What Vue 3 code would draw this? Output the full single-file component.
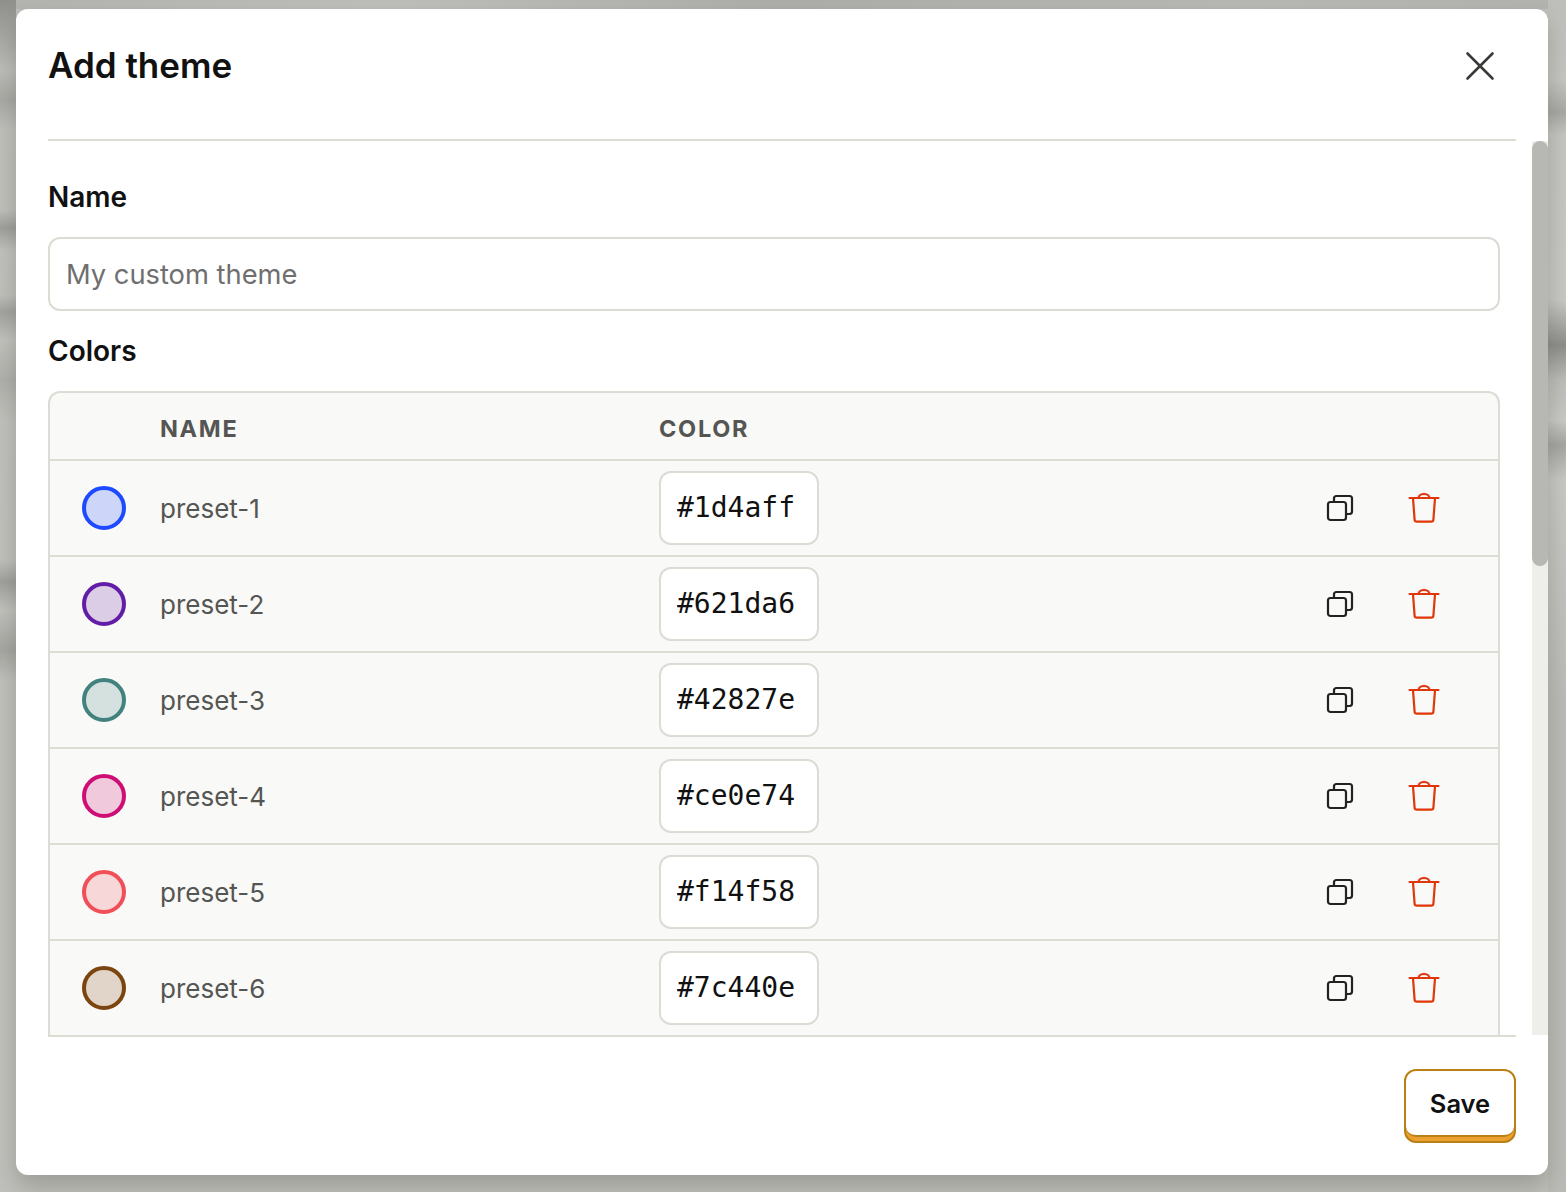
<script setup>
const presets = [
  { name: 'preset-1', color: '#1d4aff' },
  { name: 'preset-2', color: '#621da6' },
  { name: 'preset-3', color: '#42827e' },
  { name: 'preset-4', color: '#ce0e74' },
  { name: 'preset-5', color: '#f14f58' },
  { name: 'preset-6', color: '#7c440e' },
]
</script>

<template>
  <div class="backdrop">
    <div class="modal">
      <header class="modal-header">
        <h1 class="title">Add theme</h1>
        <button class="close" aria-label="Close">
          <svg width="32" height="32" viewBox="0 0 32 32" fill="none" stroke="#3a3a38" stroke-width="2.6" stroke-linecap="round">
            <path d="M3.5 3.5 L28.5 28.5 M28.5 3.5 L3.5 28.5" />
          </svg>
        </button>
      </header>

      <div class="modal-main">
        <div class="modal-body">
          <label class="label">Name</label>
          <input class="name-input" placeholder="My custom theme" />

          <label class="label">Colors</label>
          <div class="table">
            <div class="row head">
              <span></span>
              <span class="th">NAME</span>
              <span class="th">COLOR</span>
            </div>
            <div v-for="p in presets" :key="p.name" class="row">
              <span class="swatch" :style="{ borderColor: p.color, backgroundColor: p.color + '33' }"></span>
              <span class="preset-name">{{ p.name }}</span>
              <div class="cell-color">
                <input class="hex" :value="p.color" spellcheck="false" />
              </div>
              <div class="actions">
                <svg width="32" height="32" viewBox="0 0 32 32" fill="none" stroke="#222221" stroke-width="2.2" stroke-linejoin="round">
                  <rect x="4" y="10" width="18" height="18" rx="2.5" />
                  <path d="M10 10 V6.5 a2.5 2.5 0 0 1 2.5 -2.5 H25.5 a2.5 2.5 0 0 1 2.5 2.5 V19.5 a2.5 2.5 0 0 1 -2.5 2.5 H22" />
                </svg>
                <svg width="32" height="32" viewBox="0 0 32 32" fill="none" stroke="#e0370a" stroke-width="2.2" stroke-linecap="round" stroke-linejoin="round">
                  <path d="M1.5 6 H30.5" />
                  <path d="M5 6 L6.6 27.6 a2.2 2.2 0 0 0 2.2 2 H23.2 a2.2 2.2 0 0 0 2.2 -2 L27 6" />
                  <path d="M10.5 6 a5.5 4 0 0 1 11 0" />
                </svg>
              </div>
            </div>
          </div>
        </div>
        <div class="track"><div class="thumb"></div></div>
      </div>

      <footer class="modal-footer">
        <button class="save"><span class="save-face">Save</span></button>
      </footer>
    </div>
  </div>
</template>

<style>
html, body {
  margin: 0;
  background: #c0c1bc;
}
</style>

<style scoped>
.backdrop {
  box-sizing: border-box;
  width: 1566px;
  height: 1192px;
  padding: 9px 18px 17px 16px;
  overflow: hidden;
  font-family: Inter, "Liberation Sans", sans-serif;
  background:
    linear-gradient(180deg, #8f908c 0, #a3a49f 30px, #bdbeb9 70px, #a9aaa5 100px, #c0c1bc 130px, #bfc0bb 210px, #9fa09b 228px, #c1c2bd 250px, #c0c1bc 295px, #a3a49f 312px, #c2c3be 340px, #b0b1ac 380px, #c1c2bd 420px, #c0c1bc 560px, #a0a19c 582px, #c1c2bd 610px, #a6a7a2 650px, #c0c1bc 680px) left top / 16px 100% no-repeat,
    linear-gradient(180deg, #bebfba 0, #c5c6c1 80px, #a8a9a4 112px, #c5c6c1 135px, #c8c9c4 300px, #8e8f8b 345px, #bcbdb8 380px, #c9cac5 420px, #a5a6a1 445px, #c8c9c4 480px, #bbbcb7 700px) right top / 18px 100% no-repeat,
    linear-gradient(90deg, #b4b5b0, #bfc0bb 25%, #aeafaa 50%, #b9bab5 80%, #b3b4af) left top / 100% 9px no-repeat,
    #c0c1bc;
}

.modal {
  display: flex;
  flex-direction: column;
  width: 1532px;
  height: 1166px;
  background: #fff;
  border-radius: 12px;
  overflow: hidden;
  box-shadow: 0 12px 24px rgba(60, 60, 50, 0.28);
}

.modal-header {
  display: flex;
  align-items: center;
  justify-content: space-between;
  height: 114px;
  padding-bottom: 16px;
  margin: 0 32px;
  border-bottom: 2px solid #dcdcd4;
}

.title {
  margin: 0 0 2px;
  font-size: 35px;
  font-weight: 600;
  color: #111;
}

.close {
  display: flex;
  padding: 0;
  margin-right: 20px;
  background: none;
  border: 0;
}

.modal-main {
  display: flex;
  height: 894px;
  overflow: hidden;
}

.modal-body {
  flex: 1;
  min-width: 0;
  padding: 40px 32px 0;
}

.label {
  display: block;
  margin-bottom: 24px;
  font-size: 28px;
  line-height: 32px;
  font-weight: 600;
  color: #111;
}

.name-input {
  display: block;
  box-sizing: border-box;
  width: 100%;
  height: 74px;
  margin-bottom: 24px;
  padding: 0 16px;
  border: 2px solid #dcdcd4;
  border-radius: 12px;
  font-family: inherit;
  font-size: 27.3px;
  color: #111;
  outline: none;
}

.name-input::placeholder {
  color: #6f6f6f;
  opacity: 1;
}

.table {
  border: 2px solid #dcdcd4;
  border-bottom: 0;
  border-radius: 12px 12px 0 0;
  background: #f9f9f7;
}

.row {
  display: grid;
  grid-template-columns: 78px 499px 1fr auto;
  align-items: center;
  box-sizing: border-box;
  height: 96px;
  padding: 0 58px 0 32px;
  border-top: 2px solid #dcdcd4;
}

.row.head {
  height: 66px;
  padding-top: 4px;
  border-top: 0;
}

.th {
  font-size: 23.5px;
  font-weight: 700;
  letter-spacing: 1.7px;
  color: #555553;
}

.swatch {
  box-sizing: border-box;
  width: 44px;
  height: 44px;
  border: 4px solid;
  border-radius: 50%;
}

.preset-name {
  font-size: 26px;
  color: #555553;
}

.hex {
  display: block;
  box-sizing: border-box;
  width: 160px;
  height: 74px;
  padding: 0 16px 2px;
  border: 2px solid #dcdcd4;
  border-radius: 12px;
  background: #fff;
  font-family: "DejaVu Sans Mono", monospace;
  font-size: 28px;
  color: #111;
  outline: none;
}

.actions {
  display: flex;
  gap: 52px;
}

.track {
  width: 16px;
  background: #eeefea;
}

.thumb {
  height: 425px;
  border-radius: 8px;
  background: #b7b8b3;
}

.modal-footer {
  display: flex;
  justify-content: flex-end;
  flex: 1;
  margin: 0 32px;
  padding-top: 32px;
  border-top: 2px solid #dcdcd4;
}

.save {
  display: flex;
  flex-direction: column;
  box-sizing: border-box;
  width: 112px;
  height: 74px;
  padding: 0;
  border: 2px solid #b98017;
  border-radius: 12px;
  background: #eca02f;
}

.save-face {
  display: flex;
  align-items: center;
  justify-content: center;
  box-sizing: border-box;
  width: 100%;
  height: 66px;
  border-bottom: 2px solid #b98017;
  border-radius: 10px;
  background: #fff;
  font-family: Inter, sans-serif;
  font-size: 25.5px;
  font-weight: 600;
  color: #111;
}
</style>
